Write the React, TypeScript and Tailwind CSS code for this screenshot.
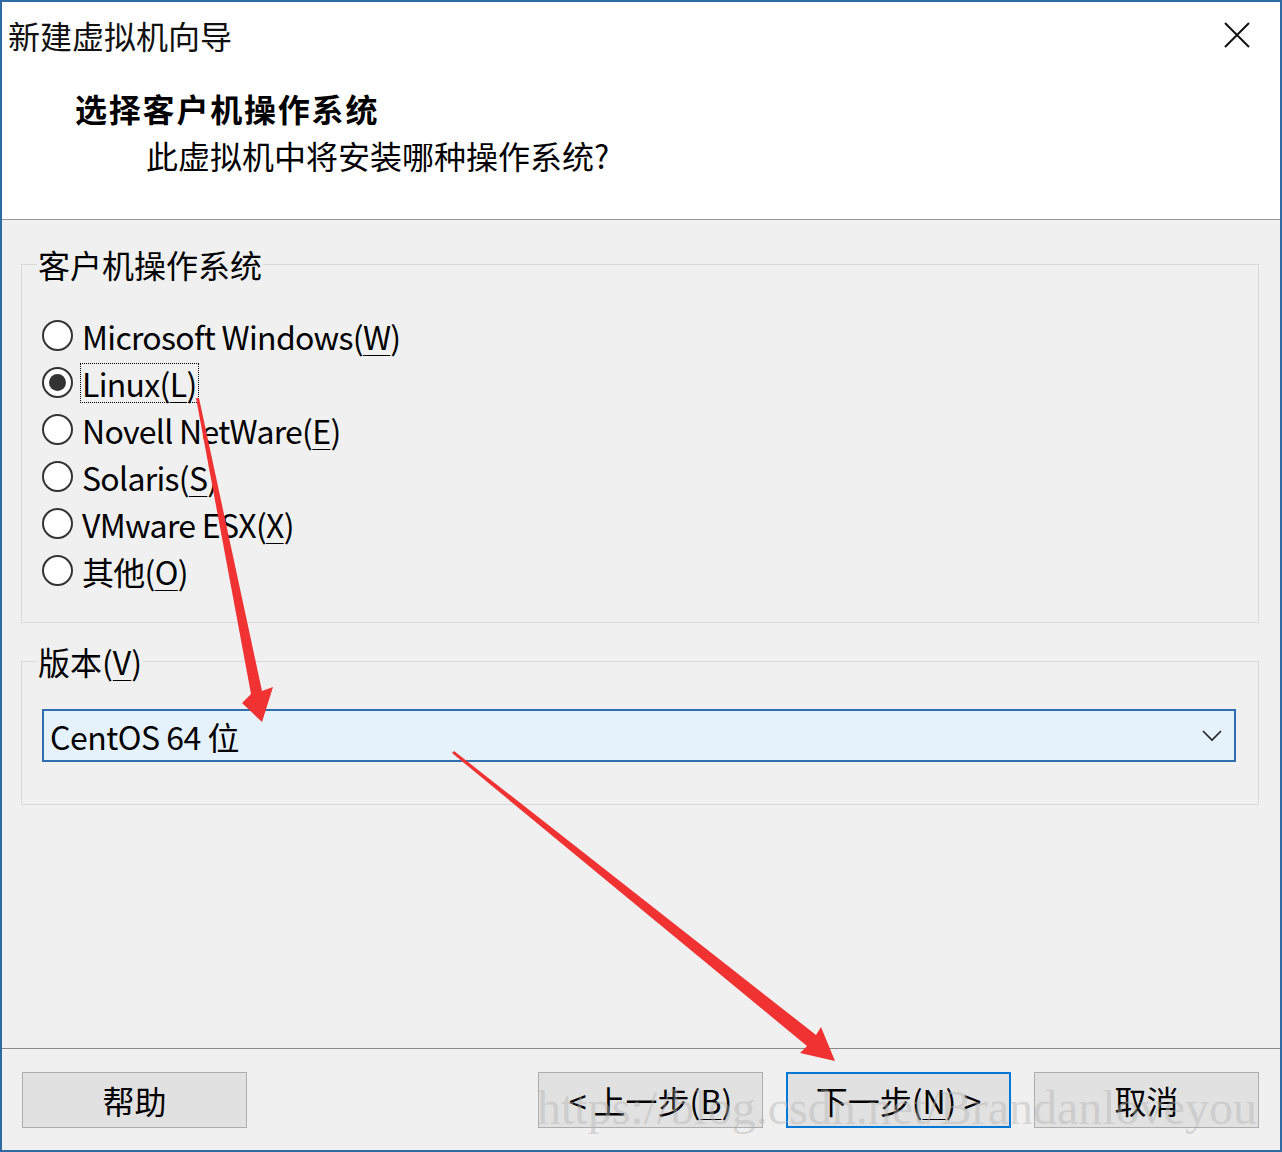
import React from "react";

const font = "font-['Noto_Sans_CJK_SC','Noto_Sans',sans-serif]";

function Radio({ checked, label, focus }: { checked?: boolean; label: React.ReactNode; focus?: boolean }) {
  return (
    <div className="flex h-[47px] items-center">
      <div className="flex h-[31px] w-[31px] items-center justify-center rounded-full border-2 border-[#333] bg-white">
        {checked && <div className="h-[17px] w-[17px] rounded-full bg-[#333]" />}
      </div>
      <div
        className={
          focus
            ? "ml-[7px] border border-dotted border-black px-[1px] leading-[38px] tracking-[-0.7px]"
            : "ml-[7px] border border-transparent px-[1px] leading-[38px] tracking-[-0.7px]"
        }
      >
        {label}
      </div>
    </div>
  );
}

function U({ children }: { children: React.ReactNode }) {
  return <span className="underline decoration-1 underline-offset-[5px]">{children}</span>;
}

function Btn({ children, primary }: { children: React.ReactNode; primary?: boolean }) {
  return (
    <div
      className={
        primary
          ? "flex h-[56px] w-[225px] items-center justify-center border-2 border-[#0078d7] bg-[#e1e1e1] text-[32px] leading-none text-black"
          : "flex h-[56px] w-[225px] items-center justify-center border border-[#adadad] bg-[#e1e1e1] text-[32px] leading-none text-black"
      }
    >
      {children}
    </div>
  );
}

export default function App() {
  return (
    <div className={`relative h-[1152px] w-[1282px] overflow-hidden ${font}`}>
      <div className="flex h-full w-full flex-col border-2 border-[#2f6aa3] bg-[#f0f0f0]">
        {/* header */}
        <div className="h-[218px] shrink-0 border-b border-[#9a9a9a] bg-white">
          <div className="flex items-start justify-between pl-[6px] pt-[12px]">
            <div className="text-[32px] leading-[42px] text-[#111]">新建虚拟机向导</div>
            <svg width="26" height="26" viewBox="0 0 26 26" className="mr-[30px] mt-[8px]">
              <path d="M1 1 L25 25 M25 1 L1 25" stroke="#111" strokeWidth="2" fill="none" />
            </svg>
          </div>
          <div className="mt-[31px] pl-[73px] text-[32px] font-bold leading-[42px] tracking-[1.8px] text-black">选择客户机操作系统</div>
          <div className="mt-[5px] pl-[144px] text-[32px] leading-[42px] text-black">此虚拟机中将安装哪种操作系统?</div>
        </div>

        {/* body */}
        <div className="flex-1 pl-[19px] pr-[21px]">
          <fieldset className="mt-[23px] border border-[#d9d9d9] pb-[28px] pl-[20px]">
            <legend className="ml-[-5px] px-[1px] text-[32px] leading-[42px] text-black">客户机操作系统</legend>
            <div className="mt-[27px] text-[32px] text-black">
              <Radio label={<>Microsoft Windows(<U>W</U>)</>} />
              <Radio checked focus label={<>Linux(<U>L</U>)</>} />
              <Radio label={<>Novell NetWare(<U>E</U>)</>} />
              <Radio label={<>Solaris(<U>S</U>)</>} />
              <Radio label={<>VMware ESX(<U>X</U>)</>} />
              <Radio label={<>其他(<U>O</U>)</>} />
            </div>
          </fieldset>

          <fieldset className="mt-[17px] border border-[#d9d9d9] pb-[42px] pl-[20px] pr-[22px]">
            <legend className="ml-[-5px] px-[1px] text-[32px] leading-[42px] text-black">
              版本(<U>V</U>)
            </legend>
            <div className="mt-[27px] flex h-[53px] items-center justify-between border-2 border-[#2f6eb0] bg-[#e5f1fb] pl-[6px] pr-[12px] text-[32px] text-black">
              <span className="tracking-[-0.5px]">CentOS 64 位</span>
              <svg width="20" height="12" viewBox="0 0 20 12">
                <path d="M1 1 L10 10 L19 1" stroke="#222" strokeWidth="1.6" fill="none" />
              </svg>
            </div>
          </fieldset>
        </div>

        {/* footer */}
        <div className="h-[102px] shrink-0 border-t border-[#8a8a8a]">
          <div className="mt-[23px] flex items-center pl-[20px] pr-[21px]">
            <Btn>帮助</Btn>
            <div className="flex-1" />
            <div className="flex gap-[23px]">
              <Btn>
                &lt; 上一步(<U>B</U>)
              </Btn>
              <Btn primary>
                下一步(<U>N</U>) &gt;
              </Btn>
              <Btn>取消</Btn>
            </div>
          </div>
        </div>
      </div>

      {/* watermark */}
      <div className="pointer-events-none absolute left-[537px] top-[1080px] whitespace-nowrap font-['Liberation_Serif',serif] text-[48px] leading-[56px] text-[#b4b4b4]/45">
        https://blog.csdn.net/Brandanloveyou
      </div>

      {/* annotation arrows */}
      <svg className="pointer-events-none absolute left-0 top-0" width="1282" height="1152" viewBox="0 0 1282 1152">
        <polygon
          points="196,398 251,694 242,703 262,722 273,687 262,691 199,398"
          fill="#f03232"
        />
        <polygon
          points="452,753 807,1046 800,1053 835,1061 821,1027 816,1035 454,751"
          fill="#f03232"
        />
      </svg>
    </div>
  );
}
